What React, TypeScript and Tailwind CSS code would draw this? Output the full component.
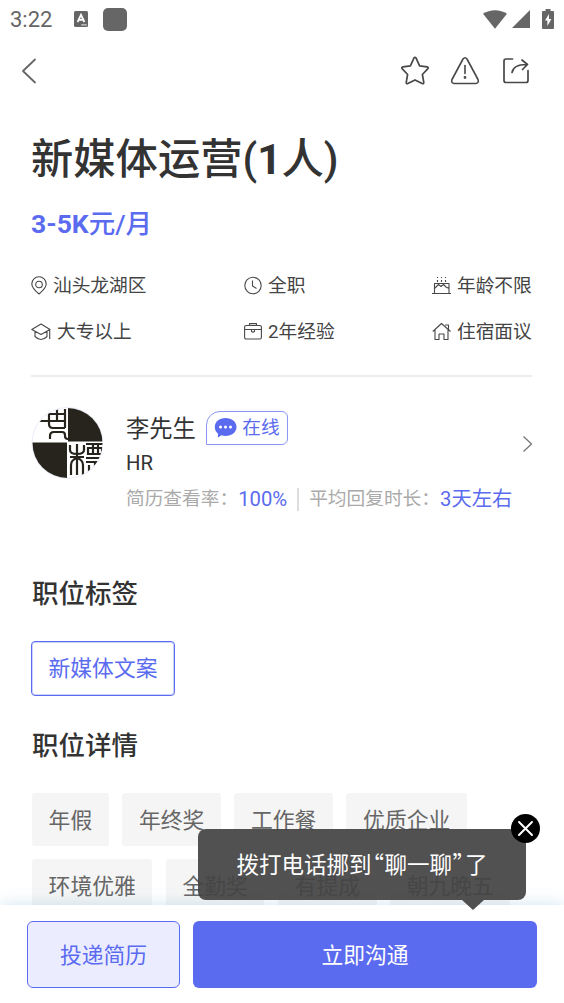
import { ReactNode, useState } from "react";

const benefitRows = [
  ["年假", "年终奖", "工作餐", "优质企业"],
  ["环境优雅", "全勤奖", "有提成", "朝九晚五"],
];

function StatusBar() {
  return (
    <div className="flex h-[38px] items-center justify-between px-[10px] text-[#666]">
      <div className="flex items-center">
        <span className="w-[64px] pt-px text-[22px] leading-[38px]">3:22</span>
        <svg className="mr-[15px] h-4 w-[14px]" viewBox="0 0 14 16">
          <rect width="14" height="16" rx="1.5" fill="#666" />
          <path d="M3.6 11 7 3.8 10.4 11M5 8.8h4" fill="none" stroke="#fff" strokeWidth="1.8" />
          <path d="M7.5 13.8h5" stroke="#fff" strokeWidth="1.2" strokeDasharray="1.3 .6" />
        </svg>
        <span className="h-[23px] w-6 rounded-[5px] bg-[#666]" />
      </div>
      <div className="flex items-center">
        <svg className="mr-[5px] h-[19px] w-6" viewBox="0 0 24 19" fill="#666">
          <path d="M0 3.8C7-1 17-1 24 3.8L12 18.7z" />
        </svg>
        <svg className="mr-[12px] h-[18px] w-[18px]" viewBox="0 0 18 18" fill="#666">
          <path d="M18 0v18H0z" />
        </svg>
        <svg className="h-5 w-3" viewBox="0 0 12 20">
          <path d="M3.5 0h5v2H11q1 0 1 1v16q0 1-1 1H1q-1 0-1-1V3q0-1 1-1h2.5z" fill="#666" />
          <path d="M7 5 3 11.5h2.4V17l4-7H7z" fill="#fff" />
        </svg>
      </div>
    </div>
  );
}

function Header() {
  return (
    <div className="flex h-[66px] items-center pl-[21px] pr-[34px]">
      <svg className="mr-auto h-[26px] w-4" viewBox="0 0 16 26" fill="none" stroke="#666" strokeWidth="1.8" strokeLinecap="round" strokeLinejoin="round">
        <path d="M14 1.5 2 13l12 11.5" />
      </svg>
      <svg className="mr-[20px] h-[30px] w-[30px]" viewBox="0 0 30 30" fill="none" stroke="#484848" strokeWidth="1.7" strokeLinejoin="round">
        <path d="M13.9 2.1q1.1-1.500 2.2 0l3.500 7.700 7.500 1.100q1.800.4.8 1.700l-5.500 5.900 1.400 8.100q0 1.600-1.600 1l-7.200-3.700-7.200 3.700q-1.600.6-1.600-1l1.400-8.100-5.500-5.900q-1-1.300.8-1.700l7.500-1.100z" />
      </svg>
      <svg className="mr-[22px] h-[30px] w-[30px]" viewBox="0 0 30 30" fill="none" stroke="#484848" strokeWidth="1.6" strokeLinejoin="round" strokeLinecap="round">
        <path d="M13 3q2-2.5 4 0l11 20.5q1.2 3.5-2 4H4q-3.2-.5-2-4z" />
        <path d="M15 9.5v8" />
        <circle cx="15" cy="21.5" r=".6" fill="#484848" />
      </svg>
      <svg className="h-[30px] w-[28px]" viewBox="0 0 28 30" fill="none" stroke="#484848" strokeWidth="1.7" strokeLinecap="round" strokeLinejoin="round">
        <path d="M10.5 3H4Q2 3 2 5v19.5q0 2 2 2h20q2 0 2-2v-10" />
        <path d="M10 16.5C11 11 16 8.3 25 8.5M20 4l5.5 4.5-5 5" />
      </svg>
    </div>
  );
}

function InfoIcon({ width, children }: { width: number; children: ReactNode }) {
  return (
    <svg width={width} height="20" viewBox={`0 0 ${width} 20`} fill="none" stroke="#484848" strokeWidth="1.1" strokeLinejoin="round">
      {children}
    </svg>
  );
}

function Info({ icon, text }: { icon: ReactNode; text: string }) {
  return (
    <div className="flex h-[46px] items-center gap-[6px] whitespace-nowrap">
      {icon}
      <span>{text}</span>
    </div>
  );
}

function JobInfo() {
  return (
    <div className="-ml-px grid h-[114px] grid-cols-[213px_188px_100px] content-start border-b-2 border-[#ededed] text-[18.7px] text-[#444]">
      <Info
        text="汕头龙湖区"
        icon={
          <InfoIcon width={16}>
            <path d="M8 18C5 15.5.8 12 .8 8a7.2 7.2 0 0 1 14.4 0c0 4-4.2 7.500-7.2 10z" />
            <circle cx="8" cy="8.5" r="3.3" />
          </InfoIcon>
        }
      />
      <Info
        text="全职"
        icon={
          <InfoIcon width={18}>
            <circle cx="9" cy="9.500" r="8.200" />
            <path d="M8.500 4.500v5.500l4 2.500" />
          </InfoIcon>
        }
      />
      <Info
        text="年龄不限"
        icon={
          <InfoIcon width={19}>
            <path d="M0 17.500h19M2.500 17.500V7.500h14.500v10M2.500 12.500l4-4 2.500 2 2.500-2 2.500 2.500 3 1.500" />
            <path d="M5.500 4v2M9.500 4v2M13.500 4v2M5.500 1v1M9.500 1v1M13.500 1v1" />
          </InfoIcon>
        }
      />
      <Info
        text="大专以上"
        icon={
          <InfoIcon width={20}>
            <path d="M.8 7.500 10 2l9 5.500-9 5zM4 9.500v5q3 3 6 3t6-3V9.500M18.700 7.500V17" />
          </InfoIcon>
        }
      />
      <Info
        text="2年经验"
        icon={
          <InfoIcon width={18}>
            <rect x=".6" y="3.500" width="16.800" height="13.500" rx="1.500" />
            <path d="M5.500 3.500V1.600h7v1.900M.6 7.500h16.800M7.500 7.500v2l1.500.8 1.500-.8v-2" />
          </InfoIcon>
        }
      />
      <Info
        text="住宿面议"
        icon={
          <InfoIcon width={19}>
            <path d="M.8 9.500 9.500 1.500l9 8M3 8v9.500h4v-5.500h5v5.500h4V8M13 3h3.500v4.500" />
          </InfoIcon>
        }
      />
    </div>
  );
}

function Avatar() {
  return (
    <svg className="-ml-px h-[72px] w-[72px] shrink-0" viewBox="0 0 72 72">
      <clipPath id="avatar">
        <circle cx="36.5" cy="36" r="35" />
      </clipPath>
      <circle cx="36.5" cy="36" r="35.5" fill="#fff" stroke="#e9edf8" />
      <g clipPath="url(#avatar)">
        <path d="M37 0h35v34.5H37zM0 35.5h36V72H0z" fill="#27241d" />
        {/* carved seal ornament */}
        <g fill="none" stroke="#27241d" strokeWidth="2.2">
          <path d="M17 7h17M8 14h26M18 5v12q0 4 4 4h12M26 2v12M34 2v19M19 32v-3q0-4 4-4h8q3 0 3 3v1q0 3 3 3" />
          <path d="M46 37v31M39 38v5q0 4 7 4t7-4v-5M40 68V58q0-5 6-7 6 2 6 7v10M39 50h14" />
          <path d="M55 37h18M57 41h14v6H57zM62 37v10M67 37v10M55 51h18M55 55h18M64 55v13M58 58v8M69 58v6" />
        </g>
      </g>
    </svg>
  );
}

function Recruiter() {
  return (
    <div className="flex h-[181px] pt-[30px]">
      <Avatar />
      <div className="ml-[23px] flex-1">
        <div className="flex h-[42px] items-center">
          <span className="pt-[2px] text-[23.3px] text-[#333]">李先生</span>
          <span className="ml-[10px] flex h-[34px] w-[82px] items-center justify-center gap-[5px] rounded-[6px] rounded-bl-none rounded-tl-[14px] border border-[#8c96f3] text-[18.7px] text-[#5b6bef]">
            <svg className="h-5 w-[23px]" viewBox="0 0 23 20">
              <path d="M11.5 0c6.200 0 11 3.800 11 9s-4.800 9-11 9q-2 0-4-.7L4 19.500v-3.800Q.8 13 .8 9C.8 3.800 5.300 0 11.500 0z" fill="#5b6bef" />
              <g fill="#fff">
                <circle cx="6.5" cy="9" r="1.5" />
                <circle cx="11.5" cy="9" r="1.5" />
                <circle cx="16.5" cy="9" r="1.5" />
              </g>
            </svg>
            <span className="pt-px">在线</span>
          </span>
        </div>
        <div className="flex h-[28px] items-center text-[20.3px] text-[#333]">
          HR
          <svg className="-mr-px ml-auto h-[18px] w-[11px] -translate-y-[19px]" viewBox="0 0 11 18" fill="none" stroke="#777" strokeWidth="1.3">
            <path d="m1.500 1.500 8 7.500-8 7.500" />
          </svg>
        </div>
        <div className="flex h-[44px] items-center whitespace-nowrap text-[18.7px] text-[#aaa]">
          简历查看率：
          <span className="text-[20.3px] text-[#5b6bef]">100%</span>
          <span className="mx-[10px] h-[23px] w-[2px] bg-[#ddd]" />
          平均回复时长：
          <span className="text-[20.3px] text-[#5b6bef]">3天左右</span>
        </div>
      </div>
    </div>
  );
}

function Quote({ children }: { children: string }) {
  return (
    <span className="inline-block w-[13px] text-center font-['Noto_Sans_CJK_SC'] leading-none [font-feature-settings:'palt']">
      {children}
    </span>
  );
}

function Tooltip({ onClose }: { onClose: () => void }) {
  return (
    <div className="absolute left-[198px] top-[829px] flex h-[71px] w-[328px] items-center justify-center rounded-[8px] bg-[#444444]/93 text-[22.5px] text-white">
      <span className="whitespace-nowrap pt-[3px]">
        拨打电话挪到<Quote>“</Quote>聊一聊<Quote>”</Quote>了
      </span>
      <svg className="absolute left-[264px] top-[71px] h-[10px] w-[22px]" viewBox="0 0 22 10">
        <path d="M0 0h22L11 10z" fill="#505050" />
      </svg>
      <button onClick={onClose} className="absolute -right-[14px] -top-[15px] h-[29px] w-[29px] cursor-pointer rounded-full bg-black">
        <svg viewBox="0 0 29 29" stroke="#fff" strokeWidth="2" strokeLinecap="round">
          <path d="m8 8 13 13M21 8 8 21" />
        </svg>
      </button>
    </div>
  );
}

export default function App() {
  const [showTip, setShowTip] = useState(true);

  return (
    <div className="relative flex h-[1003px] w-[564px] flex-col overflow-hidden bg-white font-[Roboto,'Noto_Sans_CJK_SC',sans-serif]">
      <StatusBar />
      <Header />
      <main className="h-[801px] overflow-hidden px-8">
        <h1 className="-ml-px mt-[25px] h-[62px] text-[42.3px] font-medium leading-[62px] text-[#333]">
          新媒体运营(<span className="font-bold">1</span>人)
        </h1>
        <p className="-ml-px mb-[20px] mt-[14px] h-[38px] text-[26.5px] font-medium leading-[38px] text-[#5b6bef]">
          <span className="font-bold">3-5K</span>元/月
        </p>
        <JobInfo />
        <Recruiter />
        <h2 className="mt-[16px] h-[40px] text-[26.5px] font-medium leading-[40px] text-[#333]">职位标签</h2>
        <div className="-ml-px mt-[27px] flex">
          <span className="flex h-[55px] w-[144px] items-center justify-center rounded-[4px] border-[1.5px] border-[#5b6bef] pt-[2px] text-[21.8px] text-[#5b6bef] outline outline-[#5b6bef]/30 -outline-offset-2">
            新媒体文案
          </span>
        </div>
        <h2 className="mt-[30px] h-[40px] text-[26.5px] font-medium leading-[40px] text-[#333]">职位详情</h2>
        <div className="mt-[27px] flex flex-col gap-[13px]">
          {benefitRows.map((row, index) => (
            <div key={index} className="flex gap-[13.5px]">
              {row.map((benefit) => (
                <span key={benefit} className="flex h-[53px] items-center rounded-[3px] bg-[#f5f5f5] px-[16.6px] pt-[3px] text-[21.8px] text-[#666]">
                  {benefit}
                </span>
              ))}
            </div>
          ))}
        </div>
      </main>
      <footer className="relative flex h-[98px] gap-[13px] bg-white px-[27px] pt-4 text-[21.8px] shadow-[0_-2px_14px_rgba(70,150,200,0.2)]">
        <button className="h-[67px] w-[153px] cursor-pointer rounded-[6px] border border-[#5b6bef] bg-[#ebedff] pt-[3px] text-[#5b6bef]">投递简历</button>
        <button className="h-[67px] flex-1 cursor-pointer rounded-[6px] bg-[#5b6bef] pt-[3px] text-white">立即沟通</button>
      </footer>
      {showTip && <Tooltip onClose={() => setShowTip(false)} />}
    </div>
  );
}
